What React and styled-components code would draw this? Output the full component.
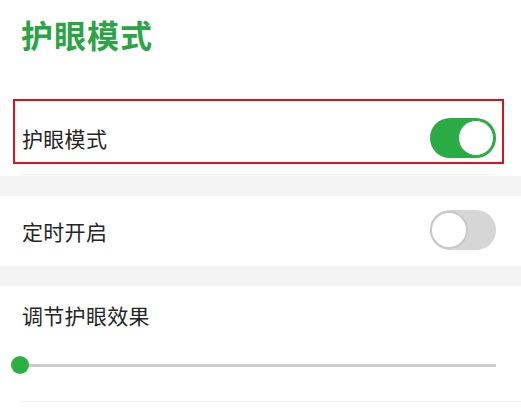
import React, { useState } from "react";
import styled, { createGlobalStyle } from "styled-components";

const GlobalStyle = createGlobalStyle`
  html, body {
    margin: 0;
    padding: 0;
    background: #ffffff;
  }
  body {
    font-family: "Noto Sans CJK SC", "Noto Sans", sans-serif;
  }
`;

export default function App() {
  const [eyeCare, setEyeCare] = useState(true);
  const [timer, setTimer] = useState(false);
  const [level] = useState(0);

  return (
    <Page>
      <GlobalStyle />
      <Header>
        <h1>护眼模式</h1>
      </Header>

      <Highlight>
        <Row>
          <Label>护眼模式</Label>
          <Switch $on={eyeCare} onClick={() => setEyeCare(!eyeCare)} />
        </Row>
      </Highlight>
      <Divider $left={20} $right={26} />
      <Band />

      <Item>
        <Label>定时开启</Label>
        <Switch $on={timer} onClick={() => setTimer(!timer)} />
      </Item>
      <Band />

      <Adjust>
        <Label>调节护眼效果</Label>
        <Slider>
          <Track>
            <Fill style={{ width: `${level}%` }} />
          </Track>
          <Thumb style={{ left: `${level}%` }} />
        </Slider>
      </Adjust>
      <Divider $left={20} $right={0} />
    </Page>
  );
}

const Page = styled.div`
  width: 521px;
  height: 418px;
  overflow: hidden;
  background: #fff;
  color: #222;
`;

const Header = styled.div`
  padding: 11px 0 0 21px;
  height: 88px;
  h1 {
    margin: 0;
    font-size: 32px;
    line-height: 46px;
    font-weight: 700;
    color: #2ba445;
    letter-spacing: 1px;
  }
`;

const Highlight = styled.div`
  margin: 0 17px 0 13px;
  border: 2px solid #d8141c;
  padding: 17px 6px 4px 7px;
  height: 40px;
`;

const Row = styled.div`
  display: flex;
  align-items: center;
  justify-content: space-between;
  height: 40px;
`;

const Label = styled.span`
  font-size: 21px;
  line-height: 30px;
  color: #252525;
  letter-spacing: 0.3px;
`;

const Divider = styled.div`
  margin: 10px ${(p) => p.$right}px 0 ${(p) => p.$left}px;
  height: 1px;
  background: #f0f0f0;
`;

const Band = styled.div`
  height: 20px;
  margin-top: 1px;
  background: #f4f4f4;
`;

const Item = styled.div`
  display: flex;
  align-items: center;
  justify-content: space-between;
  height: 70px;
  padding: 0 25px 0 22px;
  margin-top: -1px;
  & > span {
    margin-top: 2px;
  }
`;

const Switch = styled.button`
  position: relative;
  width: 66px;
  height: 40px;
  border: none;
  border-radius: 20px;
  padding: 0;
  cursor: pointer;
  background: ${(p) => (p.$on ? "#2aab44" : "#d6d6d6")};
  &::after {
    content: "";
    position: absolute;
    top: 2px;
    left: ${(p) => (p.$on ? "28px" : "0px")};
    width: 34px;
    height: 34px;
    border-radius: 50%;
    background: #fff;
    border: ${(p) => (p.$on ? "1px solid #2aab44" : "2px solid #c9c9c9")};
    margin-top: ${(p) => (p.$on ? "0" : "-1px")};
  }
`;

const Adjust = styled.div`
  padding: 14px 0 0 22px;
  height: 91px;
`;

const Slider = styled.div`
  position: relative;
  margin: 25px 25px 0 -10px;
  height: 20px;
  display: flex;
  align-items: center;
`;

const Track = styled.div`
  position: relative;
  margin-left: 10px;
  flex: 1;
  height: 3px;
  background: #cbcbcb;
`;

const Fill = styled.div`
  height: 100%;
  background: #2aab44;
`;

const Thumb = styled.div`
  position: absolute;
  top: 1px;
  margin-left: -1px;
  width: 18px;
  height: 18px;
  border-radius: 50%;
  background: #2bb044;
`;
